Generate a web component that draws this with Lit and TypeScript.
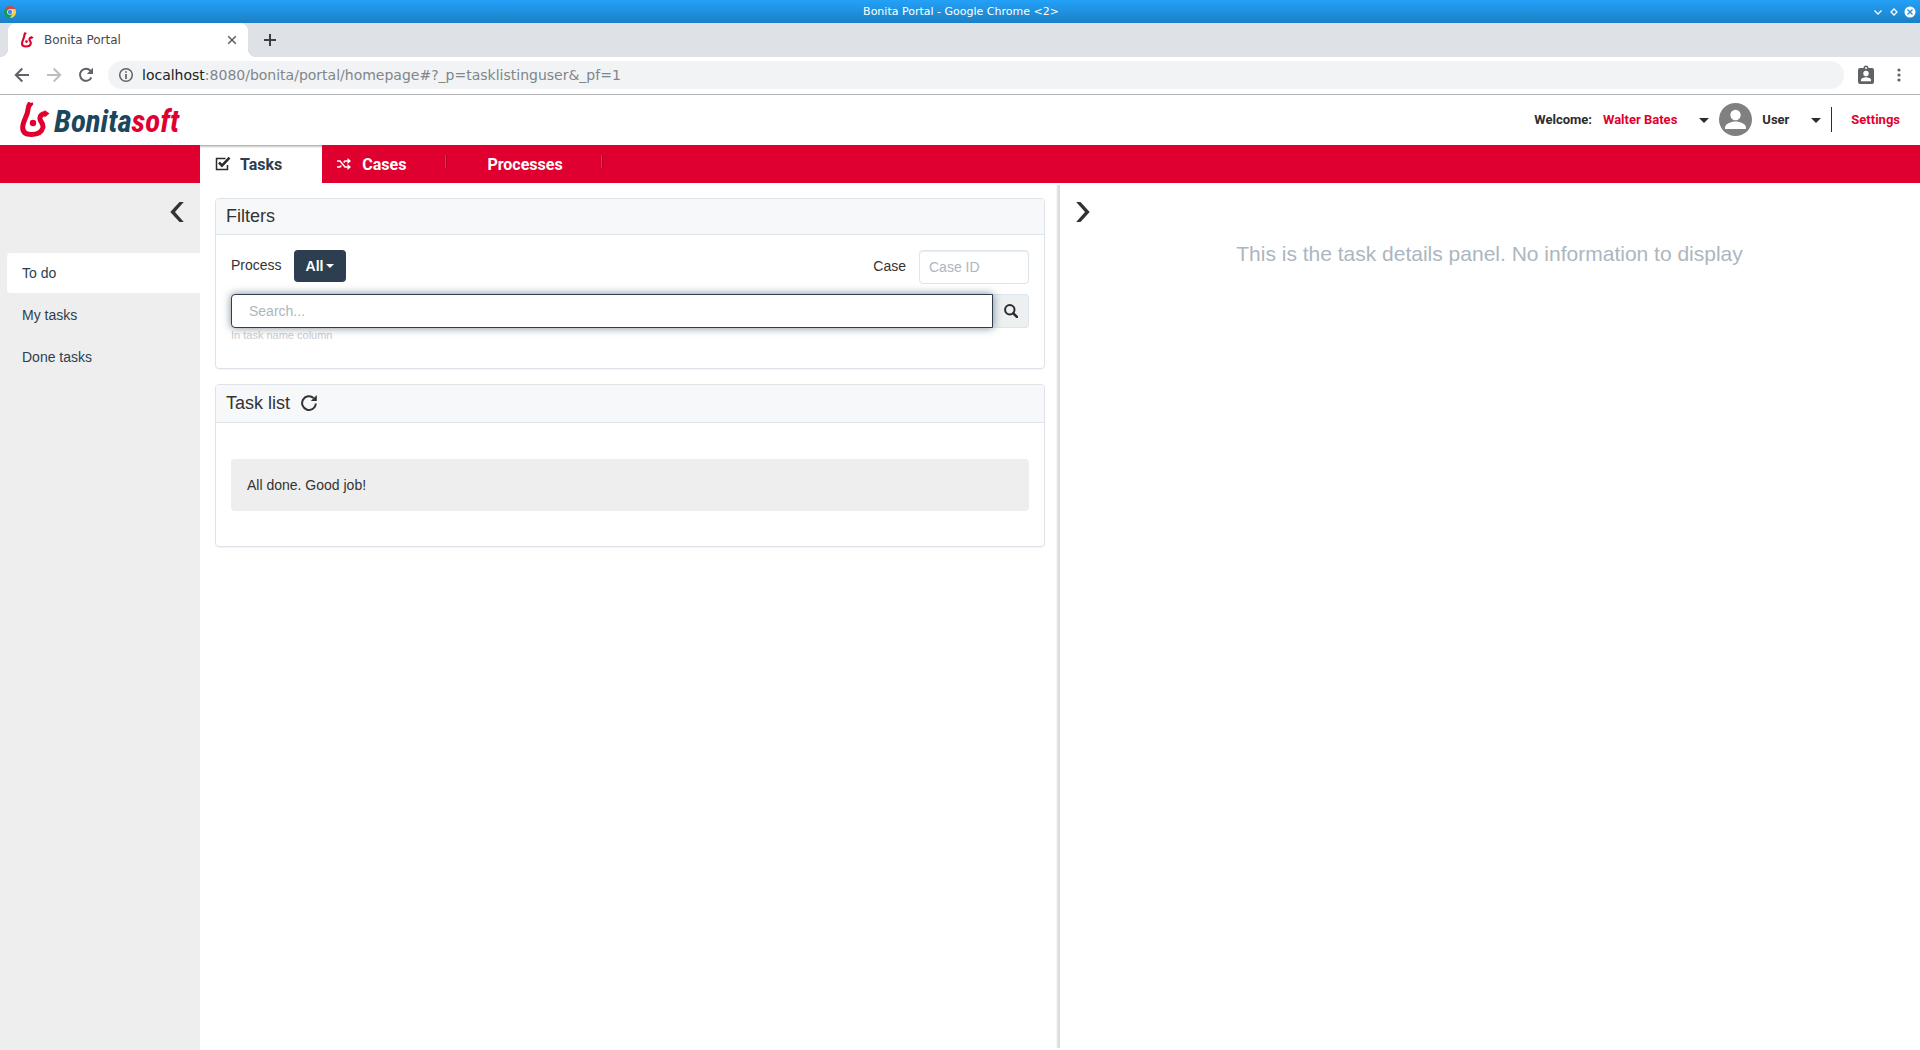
import { LitElement, html, css, svg } from "lit";
import { customElement, state } from "lit/decorators.js";

const flame = svg`
  <path fill="none" stroke="#e0002f" stroke-width="5" stroke-linecap="butt" d="M10.500 1C7.500 4 8.500 8 6.800 12.500 5 17 2.700 21 2.700 25.500c0 5 3.500 7 9 7 6.500 0 10-2.300 11.200-7 1-4.500-3.400-6-3-9.500.3-3 3.100-4.300 6-4.500"/>
  <path fill="#e0002f" d="M7.500 4C8.500 1.500 10 .4 13 .4l.2 2L11 5zM24.500 8l5 3.500-5 4z"/>
  <circle cx="13" cy="21" r="3.200" fill="#e0002f"/>`;

@customElement("browser-chrome")
export class BrowserChrome extends LitElement {
  static styles = css`
    :host { display: block; font-family: "DejaVu Sans", sans-serif; }
    * { box-sizing: border-box; }
    button { border: 0; background: none; padding: 0; font: inherit; color: inherit; display: grid; place-items: center; }
    svg { display: block; }
    .title { height: 23px; display: grid; grid-template-columns: 1fr auto 1fr; align-items: center; padding: 0 2px 0 4px; background: linear-gradient(#23a1f8, #1b80c4); color: #fff; font-size: 11px; }
    .window { display: flex; justify-content: flex-end; }
    .strip { height: 34px; background: #dee1e6; display: flex; align-items: flex-end; }
    .foot { width: 8px; height: 8px; }
    .foot.left { background: radial-gradient(circle at 0 0, #dee1e6 8px, #fff 8px); }
    .foot.right { background: radial-gradient(circle at 100% 0, #dee1e6 8px, #fff 8px); }
    .tab { width: 240px; height: 34px; background: #fff; border-radius: 8px 8px 0 0; display: flex; align-items: center; padding: 0 8px 0 12px; font-size: 12px; color: #45494d; }
    .tab span { flex: 1; padding-left: 8px; }
    .add { align-self: center; margin-left: 5px; }
    .bar { height: 37px; background: #fff; display: flex; align-items: center; padding: 0 11px 1px 14px; }
    .nav { display: flex; gap: 16px; }
    .url { flex: 1; height: 28px; margin-left: 14px; border-radius: 14px; background: #f1f3f4; display: flex; align-items: center; gap: 8px; padding: 0 10px; font-size: 14px; color: #80868b; }
    .url b { color: #202124; font-weight: normal; }
    .line { height: 1px; background: #b3b4b6; }
    .tools { display: flex; gap: 13px; margin-left: 12px; }
  `;
  render() {
    return html`
      <div class="title">
        <svg width="12" height="12" viewBox="0 0 12 12"><path fill="#db4437" d="M6 6 .9 3A6 6 0 0 1 11.200 3z"/><path fill="#ffcd40" d="M6 6V3h5.200A6 6 0 0 1 6 12z"/><path fill="#0f9d58" d="M6 6 .9 3A6 6 0 0 0 6 12l2.500-4.500z"/><circle cx="6" cy="6" r="2.800" fill="#fff"/><circle cx="6" cy="6" r="2.200" fill="#4285f4"/></svg>
        <span>Bonita Portal - Google Chrome &lt;2&gt;</span>
        <div class="window">
          <button aria-label="Minimize"><svg width="16" height="16" viewBox="0 0 16 16"><path d="m4.500 6.500 3.500 3.500 3.500-3.500" fill="none" stroke="#fff" stroke-width="1.300"/></svg></button>
          <button aria-label="Maximize"><svg width="16" height="16" viewBox="0 0 16 16"><path d="m8 5 3 3-3 3-3-3z" fill="none" stroke="#fff" stroke-width="1.300"/></svg></button>
          <button aria-label="Close window"><svg width="16" height="16" viewBox="0 0 16 16"><circle cx="8" cy="8" r="5.500" fill="#fff"/><path d="m5.500 5.500 5 5m0-5-5 5" stroke="#1e8fdb" stroke-width="1.300"/></svg></button>
        </div>
      </div>
      <div class="strip">
        <i class="foot left"></i>
        <div class="tab">
          <svg width="16" height="16" viewBox="-2 -1 37 37">${flame}</svg>
          <span>Bonita Portal</span>
          <button aria-label="Close tab"><svg width="16" height="16" viewBox="0 0 16 16"><path d="m4.200 4.200 7.600 7.600m0-7.600-7.600 7.600" stroke="#5f6368" stroke-width="1.600"/></svg></button>
        </div>
        <i class="foot right"></i>
        <button class="add" aria-label="New tab"><svg width="18" height="18" viewBox="0 0 18 18"><path d="M9 3v12M3 9h12" stroke="#3c4043" stroke-width="2"/></svg></button>
      </div>
      <div class="bar">
        <div class="nav">
          <button aria-label="Back"><svg width="16" height="16" viewBox="0 0 16 16"><path d="M15 8H2.500M8.300 1.500 1.800 8l6.500 6.500" fill="none" stroke="#5f6368" stroke-width="2"/></svg></button>
          <button aria-label="Forward"><svg width="16" height="16" viewBox="0 0 16 16"><path d="M1 8h12.500M7.700 1.500 14.200 8l-6.500 6.500" fill="none" stroke="#bcbec1" stroke-width="2"/></svg></button>
          <button aria-label="Reload"><svg width="16" height="16" viewBox="0 0 16 16"><path d="M13.400 10.500A6 6 0 1 1 12.400 3.700" fill="none" stroke="#5f6368" stroke-width="2"/><path d="M15 .8v6.200H8.800z" fill="#5f6368"/></svg></button>
        </div>
        <div class="url">
          <svg width="16" height="16" viewBox="0 0 16 16"><circle cx="8" cy="8" r="6.300" fill="none" stroke="#5f6368" stroke-width="1.500"/><path d="M8 7v5M8 4.200v1.600" stroke="#5f6368" stroke-width="1.700"/></svg>
          <span><b>localhost</b>:8080/bonita/portal/homepage#?_p=tasklistinguser&amp;_pf=1</span>
        </div>
        <div class="tools">
          <button aria-label="Profile"><svg width="20" height="20" viewBox="0 0 20 20"><path fill="#5f6368" d="M4 3h3.500a2.500 2.500 0 0 1 5 0H16a2 2 0 0 1 2 2v12a2 2 0 0 1-2 2H4a2 2 0 0 1-2-2V5a2 2 0 0 1 2-2z"/><circle cx="10" cy="3" r="1" fill="#fff"/><circle cx="10" cy="8.500" r="2.700" fill="#fff"/><path fill="#fff" d="M5 16.200v-1.300c0-1.800 3.300-2.700 5-2.700s5 .9 5 2.700v1.300z"/></svg></button>
          <button aria-label="Menu"><svg width="20" height="20" viewBox="0 0 20 20" fill="#5f6368"><circle cx="10" cy="5" r="1.600"/><circle cx="10" cy="10" r="1.600"/><circle cx="10" cy="15" r="1.600"/></svg></button>
        </div>
      </div>
      <div class="line"></div>
    `;
  }
}

@customElement("portal-header")
export class PortalHeader extends LitElement {
  static styles = css`
    :host { display: block; font-family: Roboto, "Noto Sans", sans-serif; font-weight: 700; }
    * { box-sizing: border-box; }
    svg { display: block; }
    button { border: 0; background: none; padding: 0; font: inherit; color: inherit; }
    a { text-decoration: none; color: inherit; }
    .head { height: 50px; background: #fff; display: flex; align-items: center; justify-content: space-between; padding: 0 20px; font-size: 13px; color: #2c2c2c; }
    .logo { display: flex; align-items: center; gap: 4px; font-family: "Roboto Condensed", Lato, sans-serif; font-style: italic; font-size: 31px; line-height: 36px; color: #1b475d; }
    .logo span { padding-top: 4px; }
    .logo em { color: #e0002f; }
    .user { display: flex; align-items: center; padding-bottom: 1px; }
    .red { color: #e0002f; }
    .name { margin-left: 11px; }
    .drop { display: flex; align-items: center; }
    .caret { width: 0; border: 5px solid transparent; border-top-color: #2c2c2c; border-bottom: 0; margin: 1px 0 0 22px; }
    .avatar { margin: 0 10px; }
    .rule { width: 1px; height: 25px; background: #2c2c2c; margin: 0 19px 0 10px; }
    nav { height: 38px; background: #e0002f; display: flex; padding-left: 200px; font-size: 16px; color: #fff; }
    .item { position: relative; display: flex; align-items: center; padding: 0 40px 0 15px; gap: 9px; }
    .item.on { background: linear-gradient(#a9a9a9, #fff 3px); color: #2c3e50; }
    .item.cases { gap: 11px; padding-right: 41px; }
    .item.cases::after, .item.processes::after { content: ""; position: absolute; right: 0; top: 10px; width: 2px; height: 13px; background: linear-gradient(90deg, #f2285a 50%, #b10028 50%); }
    .item.processes { padding-left: 40px; }
  `;
  render() {
    return html`
      <header class="head">
        <a class="logo" href="#home" aria-label="Bonitasoft">
          <svg width="30" height="36" viewBox="0 0 30 36">${flame}</svg>
          <span>Bonita<em>soft</em></span>
        </a>
        <div class="user">
          <span>Welcome:</span>
          <button class="drop red name">Walter Bates<i class="caret"></i></button>
          <svg class="avatar" width="33" height="33" viewBox="0 0 33 33"><circle cx="16.500" cy="16.500" r="16.500" fill="#808080"/><circle cx="16.500" cy="12" r="5.200" fill="#fff"/><path fill="#fff" d="M6 26v-1.500c0-3.500 6-6 10.500-6s10.500 2.500 10.500 6V26z"/></svg>
          <button class="drop">User<i class="caret"></i></button>
          <i class="rule"></i>
          <a class="red" href="#settings">Settings</a>
        </div>
      </header>
      <nav>
        <a class="item on" href="#tasks"><svg width="16" height="14" viewBox="0 0 16 14"><path d="M10.500 1.500h-9v11h11V8" fill="none" stroke="#2c2c2c" stroke-width="1.500"/><path d="m4 5.500 3 3.200 7.500-8" fill="none" stroke="#2c2c2c" stroke-width="2.600"/></svg>Tasks</a>
        <a class="item cases" href="#cases"><svg width="14" height="12" viewBox="0 0 14 12"><path d="M0 3h3l5 6h3M0 9h3l1.300-1.500M6.700 4.500 8 3h3" fill="none" stroke="#fff" stroke-width="1.500"/><path fill="#fff" d="m10.500 0 3.500 3-3.500 3zm0 6L14 9l-3.500 3z"/></svg>Cases</a>
        <a class="item processes" href="#processes">Processes</a>
      </nav>
    `;
  }
}

@customElement("task-page")
export class TaskPage extends LitElement {
  static styles = css`
    :host { display: grid; grid-template-columns: 200px 856fr 4px 860fr; flex: 1; font: 14px/20px "Liberation Sans", Arial, sans-serif; color: #333; }
    * { box-sizing: border-box; }
    svg { display: block; }
    button { border: 0; background: none; padding: 0; font: inherit; color: inherit; }
    h2 { margin: 0; font-size: 18px; line-height: 20px; font-weight: normal; }
    .side { background: #eee; padding: 18px 0 0 7px; display: flex; flex-direction: column; }
    .side .chev { align-self: flex-end; margin-right: 16px; }
    .menu { margin: 30px 0 0; padding: 0; list-style: none; display: grid; gap: 2px; }
    .menu a { display: block; padding: 10px 15px; color: #2c3e50; text-decoration: none; border-radius: 4px 0 0 4px; }
    .menu a.on { background: #fff; }
    .main { padding: 15px 11px 0 15px; display: flex; flex-direction: column; gap: 15px; }
    .divider { margin: 2px 0 2px; background: linear-gradient(90deg, #fff, #dcdcdc 2px); }
    .details { padding: 18px 17px 0 16px; }
    .details p { margin: 11px 0 0; font-size: 21px; line-height: 30px; color: #acb6c0; text-align: center; }
    .card { border: 1px solid #dfe3e9; border-radius: 4px; box-shadow: 0 1px 1px rgba(0, 0, 0, .05); }
    .card header { background: #f6f8fa; border-bottom: 1px solid #dce4ec; padding: 7px 10px 8px; border-radius: 3px 3px 0 0; display: flex; gap: 11px; }
    .card.list header { padding: 8px 10px 9px; }
    .filters { padding: 15px 15px 28px; }
    .row { display: flex; align-items: flex-start; }
    .process { padding: 5px 0; }
    .all { height: 32px; margin-left: 12px; padding: 0 12px; border-radius: 4px; background: #2c3e50; color: #fff; font-weight: bold; display: flex; align-items: center; gap: 3px; }
    .all i { border: 4px solid transparent; border-top-color: #fff; border-bottom: 0; }
    .case { margin-left: auto; padding: 6px 13px 6px 0; }
    input { height: 34px; border: 1px solid #dce4ec; border-radius: 4px; font: inherit; color: #2c3e50; background: #fff; outline: 0; min-width: 0; }
    input::placeholder { color: #acb6c0; opacity: 1; }
    .id { width: 110px; padding: 0 9px; box-shadow: inset 0 1px 1px rgba(0, 0, 0, .075); }
    .search { display: flex; margin-top: 10px; }
    .search input { flex: 1; padding: 0 17px; border-color: #2c3e50; border-radius: 4px 0 0 4px; box-shadow: 0 0 8px rgba(44, 62, 80, .6); position: relative; }
    .search button { width: 36px; height: 34px; border: 1px solid #dce4ec; border-left: 0; border-radius: 0 4px 4px 0; background: #ecf0f1; display: grid; place-items: center; }
    .hint { margin: 0; height: 12px; overflow: hidden; font-size: 11px; line-height: 14px; color: #ccc; }
    .body { padding: 36px 15px 35px; }
    .well { background: #eee; border-radius: 4px; padding: 16px; }
  `;
  @state() private items = ["To do", "My tasks", "Done tasks"];
  @state() private current = 0;
  render() {
    return html`
      <aside class="side">
        <button class="chev" aria-label="Collapse menu"><svg width="14" height="22" viewBox="0 0 14 22"><path d="M.3 11 9.500 1H13.800L5 11l8.800 10H9.500z" fill="#333"/></svg></button>
        <ul class="menu">${this.items.map((t, i) => html`<li><a class=${i === this.current ? "on" : ""} href="#" @click=${(e: Event) => { e.preventDefault(); this.current = i; }}>${t}</a></li>`)}</ul>
      </aside>
      <main class="main">
        <section class="card">
          <header><h2>Filters</h2></header>
          <div class="filters">
            <div class="row">
              <label class="process" for="process">Process</label>
              <button class="all" id="process">All<i></i></button>
              <label class="case" for="case">Case</label>
              <input class="id" id="case" placeholder="Case ID">
            </div>
            <div class="search">
              <input aria-label="Search" placeholder="Search...">
              <button aria-label="Run search"><svg width="14" height="14" viewBox="0 0 14 14"><circle cx="5.800" cy="5.800" r="4.700" fill="none" stroke="#2c2c2c" stroke-width="2"/><path d="m9.300 9.300 3.600 3.600" stroke="#2c2c2c" stroke-width="2.600" stroke-linecap="round"/></svg></button>
            </div>
            <p class="hint">In task name column</p>
          </div>
        </section>
        <section class="card list">
          <header><h2>Task list</h2><button aria-label="Refresh"><svg width="16" height="16" viewBox="0 0 16 16"><path d="M14.900 8.500A6.900 6.900 0 1 1 12.600 2.900" fill="none" stroke="#333" stroke-width="2"/><path d="M15.800 0v6H9.800z" fill="#333"/></svg></button></header>
          <div class="body"><div class="well">All done. Good job!</div></div>
        </section>
      </main>
      <i class="divider"></i>
      <aside class="details">
        <button aria-label="Hide details"><svg width="14" height="22" viewBox="0 0 14 22"><path d="M13.700 11 4.500 1H.2L9 11 .2 21H4.500z" fill="#333"/></svg></button>
        <p>This is the task details panel. No information to display</p>
      </aside>
    `;
  }
}

@customElement("app-root")
export class AppRoot extends LitElement {
  static styles = css`
    :host { display: flex; flex-direction: column; min-height: 100vh; background: #fff; }
  `;
  render() {
    return html`<browser-chrome></browser-chrome><portal-header></portal-header><task-page></task-page>`;
  }
}
